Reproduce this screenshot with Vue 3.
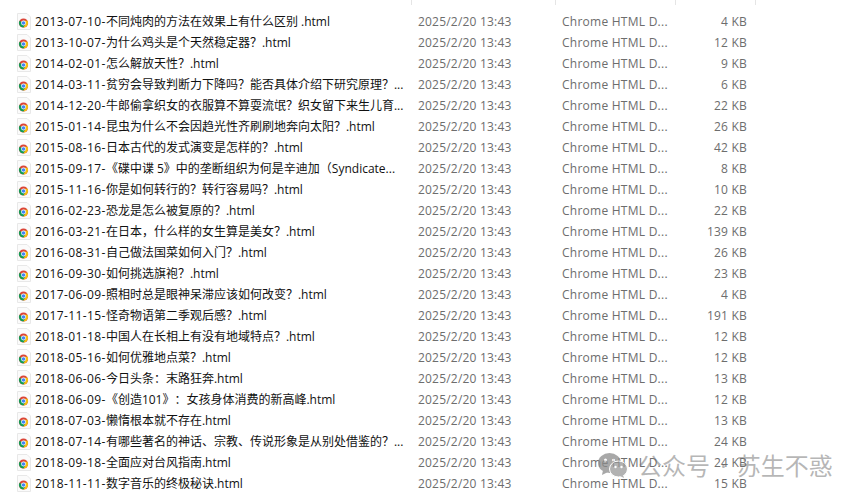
<template>
  <div class="explorer">
    <div class="header">
      <span class="sep sep-name"></span>
      <span class="sep sep-date"></span>
      <span class="sep sep-type"></span>
      <span class="sep sep-size"></span>
    </div>
    <div v-for="row in rows" :key="row.name" class="row">
      <svg class="file-icon" width="16" height="17" viewBox="0 0 16 17">
        <path d="M1.500 .5h9.500l3.500 3.500v12.500h-13z" fill="#fbfbfb" stroke="#e8e8e8" />
        <circle cx="7.500" cy="10" r="4.600" fill="#db4437" />
        <path d="M7.500 10 3.500 7.700A4.600 4.600 0 0 0 7.500 14.600l2.300-4z" fill="#0f9d58" />
        <path d="M7.500 10 9.800 10.600 7.500 14.600A4.600 4.600 0 0 0 11.500 7.700H7.500z" fill="#f4c20d" />
        <circle cx="7.500" cy="10" r="2.400" fill="#fff" />
        <circle cx="7.500" cy="10" r="1.800" fill="#4285f4" />
      </svg>
      <span class="name"><span class="stamp">{{ row.name.slice(0, 11) }}</span>{{ row.name.slice(11) }}</span>
      <span class="date">2025/2/20 13:43</span>
      <span class="type">Chrome HTML D...</span>
      <span class="size">{{ row.size }} KB</span>
    </div>
    <div class="watermark">
      <svg class="wechat" width="30" height="25" viewBox="0 0 30 25">
        <ellipse cx="11.500" cy="10" rx="11.500" ry="10" fill="#8c8c8c" />
        <path d="M5 17l-1 5 6-3z" fill="#8c8c8c" />
        <circle cx="7.500" cy="7" r="1.500" fill="#fff" />
        <circle cx="15.500" cy="7" r="1.500" fill="#fff" />
        <ellipse cx="20.500" cy="16" rx="9" ry="8" fill="#999" stroke="#fff" />
        <path d="M25 22l1 3-4-2z" fill="#999" />
        <circle cx="17.500" cy="14" r="1.200" fill="#fff" />
        <circle cx="23.500" cy="14" r="1.200" fill="#fff" />
      </svg>
      <span class="mark-text">公众号 · 苏生不惑</span>
    </div>
  </div>
</template>

<script setup>
const rows = [
  { name: '2013-07-10-不同炖肉的方法在效果上有什么区别 .html', size: 4 },
  { name: '2013-10-07-为什么鸡头是个天然稳定器？.html', size: 12 },
  { name: '2014-02-01-怎么解放天性？.html', size: 9 },
  { name: '2014-03-11-贫穷会导致判断力下降吗？能否具体介绍下研究原理？...', size: 6 },
  { name: '2014-12-20-牛郎偷拿织女的衣服算不算耍流氓？织女留下来生儿育...', size: 22 },
  { name: '2015-01-14-昆虫为什么不会因趋光性齐刷刷地奔向太阳？.html', size: 26 },
  { name: '2015-08-16-日本古代的发式演变是怎样的？.html', size: 42 },
  { name: '2015-09-17-《碟中谍 5》中的垄断组织为何是辛迪加（Syndicate...', size: 8 },
  { name: '2015-11-16-你是如何转行的？转行容易吗？.html', size: 10 },
  { name: '2016-02-23-恐龙是怎么被复原的？.html', size: 22 },
  { name: '2016-03-21-在日本，什么样的女生算是美女？.html', size: 139 },
  { name: '2016-08-31-自己做法国菜如何入门？.html', size: 26 },
  { name: '2016-09-30-如何挑选旗袍？.html', size: 23 },
  { name: '2017-06-09-照相时总是眼神呆滞应该如何改变？.html', size: 4 },
  { name: '2017-11-15-怪奇物语第二季观后感？.html', size: 191 },
  { name: '2018-01-18-中国人在长相上有没有地域特点？.html', size: 12 },
  { name: '2018-05-16-如何优雅地点菜？.html', size: 12 },
  { name: '2018-06-06-今日头条：末路狂奔.html', size: 13 },
  { name: '2018-06-09-《创造101》：女孩身体消费的新高峰.html', size: 12 },
  { name: '2018-07-03-懒惰根本就不存在.html', size: 13 },
  { name: '2018-07-14-有哪些著名的神话、宗教、传说形象是从别处借鉴的？...', size: 24 },
  { name: '2018-09-18-全面应对台风指南.html', size: 24 },
  { name: '2018-11-11-数字音乐的终极秘诀.html', size: 15 }
]
</script>

<style>
html, body {
  margin: 0;
  background: #fff;
  overflow: hidden;
}
</style>

<style scoped>
.explorer {
  position: relative;
  width: 863px;
  height: 500px;
  padding-top: 11px;
  box-sizing: border-box;
  font-family: "Open Sans", "Noto Sans CJK SC", sans-serif;
  font-size: 12px;
  overflow: hidden;
}

.header {
  position: absolute;
  top: 0;
  left: 0;
  width: 100%;
  height: 5px;
}

.sep {
  position: absolute;
  top: 0;
  width: 1px;
  height: 5px;
  background: #e5e5e5;
}

.sep-name { left: 411px; }
.sep-date { left: 555px; }
.sep-type { left: 675px; }
.sep-size { left: 755px; }

.row {
  display: grid;
  grid-template-columns: 16px 373px 157px 106px 79px;
  align-items: center;
  height: 21px;
  line-height: 21px;
  padding-left: 16px;
  white-space: nowrap;
}

.file-icon {
  display: block;
}

.name {
  margin-left: 3px;
  color: #111;
  text-spacing-trim: space-all;
}

.stamp {
  letter-spacing: 0.4px;
}

.date {
  margin-left: 13px;
  color: #6d6d6d;
  letter-spacing: 0.2px;
}

.type {
  color: #6d6d6d;
  letter-spacing: 0.25px;
}

.size {
  color: #6d6d6d;
  text-align: right;
  letter-spacing: 0.2px;
}

.watermark {
  position: absolute;
  left: 598px;
  top: 453px;
  display: flex;
  align-items: center;
  gap: 10px;
  height: 25px;
  font-size: 24px;
  line-height: 25px;
  color: rgba(110, 110, 110, 0.5);
  white-space: nowrap;
}

.wechat {
  opacity: 0.75;
}

.mark-text {
  word-spacing: 4px;
}
</style>
